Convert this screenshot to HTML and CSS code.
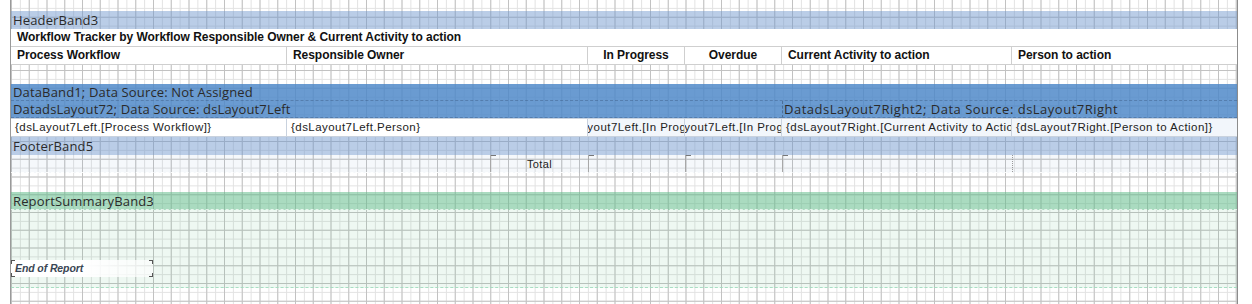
FILE: index.html
```html
<!DOCTYPE html>
<html lang="en">
<head>
    <meta charset="UTF-8">
    <meta name="viewport" content="width=device-width, initial-scale=1.0">
    <title>Report Designer</title>
    <link rel="stylesheet" href="styles.css">
</head>
<body>
    <div class="page">
        <div class="space top"></div>

        <div class="band header">HeaderBand3</div>
        <div class="title">Workflow Tracker by Workflow Responsible Owner &amp; Current Activity to action</div>
        <div class="row cols">
            <div class="cell">Process Workflow</div>
            <div class="cell">Responsible Owner</div>
            <div class="cell center">In Progress</div>
            <div class="cell center">Overdue</div>
            <div class="cell">Current Activity to action</div>
            <div class="cell">Person to action</div>
        </div>

        <div class="space"></div>

        <div class="band data">DataBand1; Data Source: Not Assigned</div>
        <div class="split">
            <div class="band data left">DatadsLayout72; Data Source: dsLayout7Left</div>
            <div class="band data right">DatadsLayout7Right2; Data Source: dsLayout7Right</div>
        </div>
        <div class="row fields">
            <div class="cell">{dsLayout7Left.[Process Workflow]}</div>
            <div class="cell">{dsLayout7Left.Person}</div>
            <div class="cell tint center"><span>{dsLayout7Left.[In Progress]}</span></div>
            <div class="cell tint center"><span>{dsLayout7Left.[In Progress]}</span></div>
            <div class="cell tint">{dsLayout7Right.[Current Activity to Action]}</div>
            <div class="cell tint">{dsLayout7Right.[Person to Action]}</div>
        </div>

        <div class="band header">FooterBand5</div>
        <div class="row totals">
            <div class="blank"></div>
            <div class="cell marks center">Total</div>
            <div class="cell marks"></div>
            <div class="cell marks"></div>
            <div class="cell marks"></div>
            <div class="cell"></div>
        </div>

        <div class="space"></div>

        <div class="band summary">ReportSummaryBand3</div>
        <div class="summary-body">
            <div class="end-box">End of Report</div>
        </div>
    </div>
</body>
</html>
```

FILE: styles.css
```css
* {
    margin: 0;
    padding: 0;
    box-sizing: border-box;
}
body {
    background: #fff;
    height: 304px;
    overflow: hidden;
    font-family: "Liberation Sans", Arial, sans-serif;
}
.page {
    margin-left: 10px;
    width: 1228px;
    height: 304px;
    border-left: 1px solid #9a9a9a;
    border-right: 1px solid #8c8c8c;
    background-color: #fff;
    background-image:
        linear-gradient(to right, #c2c2c2 1px, transparent 1px),
        linear-gradient(to bottom, #c2c2c2 1px, transparent 1px),
        linear-gradient(to right, #e2e2e2 1px, transparent 1px),
        linear-gradient(to bottom, #e2e2e2 1px, transparent 1px);
    background-size: 17.75px 17.75px, 17.75px 17.75px, 8.875px 8.875px, 8.875px 8.875px;
    background-position: 0 0, 0 -1px, 0 0, 0 -1px;
}
.space {
    height: 19px;
}
.space.top {
    height: 11px;
}

/* bands */
.band {
    height: 18px;
    padding-left: 2px;
    font-family: "Open Sans", "Noto Sans", sans-serif;
    font-size: 13px;
    letter-spacing: 0.15px;
    line-height: 18px;
    color: #2a2a2a;
    white-space: nowrap;
}
.band.header {
    background: rgba(110, 150, 205, 0.48);
}
.band.data {
    height: 17px;
    line-height: 17px;
    background: rgba(78, 136, 200, 0.84);
    border-bottom: 1px dashed rgba(60, 90, 130, 0.45);
}
.split {
    display: flex;
}
.split .left {
    width: 771px;
}
.split .right {
    flex: 1;
    border-left: 1px dashed rgba(50, 70, 100, 0.5);
    padding-left: 1px;
    letter-spacing: 0.5px;
}
.band.summary {
    background: rgba(100, 190, 140, 0.55);
    border-bottom: 1px dashed rgba(255, 255, 255, 0.7);
}

/* header rows */
.title {
    height: 17px;
    background: #fff;
    padding-left: 6px;
    font-size: 12px;
    font-weight: bold;
    letter-spacing: -0.05px;
    line-height: 17px;
    color: #111;
}
.row {
    display: grid;
    grid-template-columns: 276px 301px 97px 97px 230px 1fr;
}
.cell {
    white-space: nowrap;
    overflow: hidden;
}
.cols {
    height: 19px;
    background: #fff;
    border-top: 1px solid #cfcfcf;
    border-bottom: 1px solid #cfcfcf;
}
.cols .cell {
    padding-left: 6px;
    font-size: 12px;
    font-weight: bold;
    letter-spacing: -0.05px;
    line-height: 17px;
    color: #111;
    border-right: 1px solid #cfcfcf;
}
.cols .cell:last-child {
    border-right: none;
}
.center {
    text-align: center;
}
.cols .center {
    padding-left: 0;
}

/* data fields */
.fields {
    height: 19px;
    border-top: 1px solid #c9d2de;
    border-bottom: 1px solid #c9d2de;
}
.fields .cell {
    background: #fff;
    border-right: 1px solid #c9d2de;
    padding-left: 4px;
    font-size: 11.5px;
    letter-spacing: 0.45px;
    line-height: 17px;
    color: #222;
}
.fields .cell.tint {
    background: #f2f6fb;
}
.fields .cell.center {
    padding-left: 0;
    display: flex;
    justify-content: center;
}
.fields .cell.center span {
    flex: none;
    margin-left: 2px;
}
.fields .cell:last-child {
    border-right: none;
}

/* footer cells */
.totals {
    height: 18px;
    background: rgba(120, 150, 200, 0.07);
    grid-template-columns: 479px 98px 97px 97px 230px 1fr;
    border-bottom: 1px dashed rgba(255, 255, 255, 0.9);
}
.totals .cell {
    font-size: 11px;
    letter-spacing: 0.4px;
    line-height: 18px;
    color: #222;
}
.marks {
    border-left: 1px solid #a8a8a8;
    background:
        linear-gradient(#777, #777) left top / 5px 1px no-repeat;
}
.totals .cell:last-child {
    border-left: 1px dotted #9a9a9a;
}

/* summary */
.summary-body {
    height: 78px;
    padding-top: 50px;
    background: rgba(100, 190, 140, 0.11);
    border-bottom: 1px dashed rgba(160, 220, 190, 0.9);
}
.end-box {
    width: 142px;
    height: 17px;
    padding-left: 4px;
    font-size: 10.5px;
    font-weight: bold;
    font-style: italic;
    letter-spacing: -0.1px;
    line-height: 17px;
    color: #3a4654;
    background:
        linear-gradient(#555, #555) left top / 1px 4px no-repeat,
        linear-gradient(#555, #555) left top / 4px 1px no-repeat,
        linear-gradient(#555, #555) right top / 1px 4px no-repeat,
        linear-gradient(#555, #555) right top / 4px 1px no-repeat,
        linear-gradient(#555, #555) left bottom / 1px 4px no-repeat,
        linear-gradient(#555, #555) left bottom / 4px 1px no-repeat,
        linear-gradient(#555, #555) right bottom / 1px 4px no-repeat,
        linear-gradient(#555, #555) right bottom / 4px 1px no-repeat,
        linear-gradient(to right, #fff 50%, rgba(255, 255, 255, 0.6));
}
```
